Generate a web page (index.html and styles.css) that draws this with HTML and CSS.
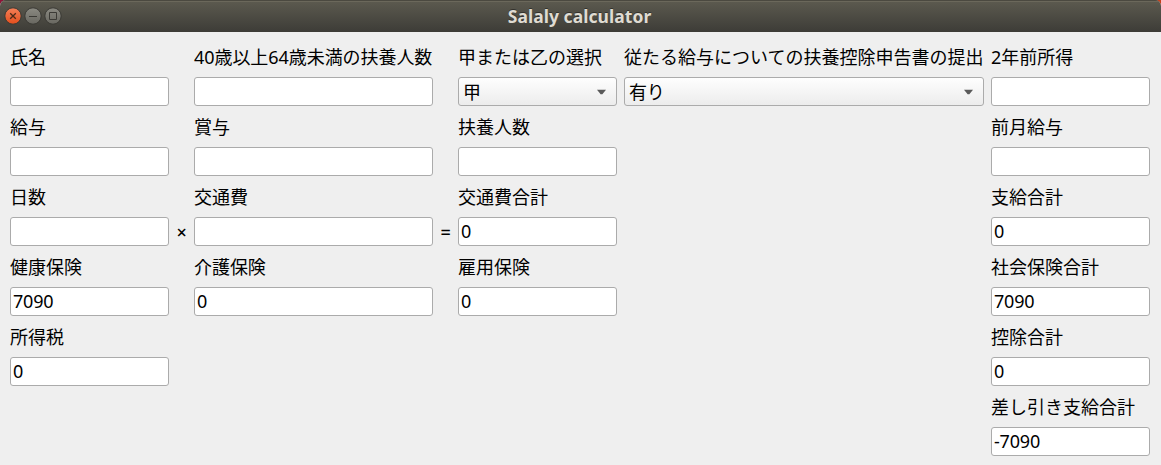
FILE: index.html
```html
<!DOCTYPE html>
<html lang="ja">
<head>
<meta charset="utf-8">
<title>Salaly calculator</title>
<link rel="stylesheet" href="styles.css">
</head>
<body>
<div class="window">
  <header class="titlebar">
    <div class="controls">
      <svg class="control" viewBox="0 0 18 18"><defs><linearGradient id="orange" x1="0" y1="0" x2="0" y2="1"><stop offset="0" stop-color="#f58058"/><stop offset="1" stop-color="#e34e1c"/></linearGradient><linearGradient id="gray" x1="0" y1="0" x2="0" y2="1"><stop offset="0" stop-color="#8b8a82"/><stop offset="1" stop-color="#686760"/></linearGradient></defs><circle cx="9" cy="9" r="8.2" fill="url(#orange)" stroke="#3a3934"/><path d="M6.2 6.2l5.6 5.6M11.8 6.2l-5.6 5.6" stroke="#4c2a18" stroke-width="1.3"/></svg>
      <svg class="control" viewBox="0 0 18 18"><circle cx="9" cy="9" r="8.2" fill="url(#gray)" stroke="#3a3934"/><path d="M5 9.5h8" stroke="#3b3a35"/></svg>
      <svg class="control" viewBox="0 0 18 18"><circle cx="9" cy="9" r="8.2" fill="url(#gray)" stroke="#3a3934"/><path d="M5.5 5.5h7v7h-7z" fill="none" stroke="#3b3a35"/></svg>
    </div>
    <h1 class="title">Salaly calculator</h1>
  </header>
  <main class="form">
    <label class="c1">氏名</label>
    <label class="c3">40歳以上64歳未満の扶養人数</label>
    <label class="c5">甲または乙の選択</label>
    <label class="c6">従たる給与についての扶養控除申告書の提出</label>
    <label class="c7">2年前所得</label>
    <div class="field c1"></div>
    <div class="field c3"></div>
    <div class="field combo c5"><span>甲</span><svg class="arrow" viewBox="0 0 10 6"><path d="M0 0.5h10L6 5.5H4z"/></svg></div>
    <div class="field combo c6"><span>有り</span><svg class="arrow" viewBox="0 0 10 6"><path d="M0 0.5h10L6 5.5H4z"/></svg></div>
    <div class="field c7"></div>

    <label class="c1">給与</label>
    <label class="c3">賞与</label>
    <label class="c5">扶養人数</label>
    <label class="c7">前月給与</label>
    <div class="field c1"></div>
    <div class="field c3"></div>
    <div class="field c5"></div>
    <div class="field c7"></div>

    <label class="c1">日数</label>
    <label class="c3">交通費</label>
    <label class="c5">交通費合計</label>
    <label class="c7">支給合計</label>
    <div class="field c1"></div>
    <span class="operator c2">×</span>
    <div class="field c3"></div>
    <span class="operator c4">=</span>
    <div class="field c5">0</div>
    <div class="field c7">0</div>

    <label class="c1">健康保険</label>
    <label class="c3">介護保険</label>
    <label class="c5">雇用保険</label>
    <label class="c7">社会保険合計</label>
    <div class="field c1">7090</div>
    <div class="field c3">0</div>
    <div class="field c5">0</div>
    <div class="field c7">7090</div>

    <label class="c1">所得税</label>
    <label class="c7">控除合計</label>
    <div class="field c1">0</div>
    <div class="field c7">0</div>

    <label class="c7">差し引き支給合計</label>
    <div class="field c7">-7090</div>
  </main>
</div>
</body>
</html>
```
FILE: styles.css
```css
* { box-sizing: border-box; }
body {
  margin: 0;
  background: linear-gradient(90deg, #8e1538 50%, #c8401c 50%);
  font: 18px/28px "Noto Sans", "Noto Sans CJK JP", sans-serif;
  color: #000;
}
.window {
  height: 465px;
  overflow: hidden;
  border-radius: 6px 6px 0 0;
  background: #efefef;
}
.titlebar {
  display: grid;
  grid-template-columns: 1fr auto 1fr;
  align-items: center;
  height: 32px;
  padding: 0 6px 0 4px;
  background: linear-gradient(#5d5b50, #3d3c37);
  box-shadow: inset 0 1px #4b4940, inset 0 2px #6b685b;
}
.controls { display: flex; gap: 2px; }
.control { width: 18px; height: 18px; }
.title {
  margin: 0;
  font: bold 17.5px/32px "Noto Sans", sans-serif;
  letter-spacing: 0.05px;
  color: #dfdbd2;
  text-shadow: 0 -1px #33322d;
}
.form {
  display: grid;
  grid-template-columns: 159px 11px 239px 11px 159px 360px 159px;
  grid-auto-rows: 29px;
  gap: 6px 7px;
  padding: 10px;
}
.c1 { grid-column: 1; }
.c2 { grid-column: 2; }
.c3 { grid-column: 3; }
.c4 { grid-column: 4; }
.c5 { grid-column: 5; }
.c6 { grid-column: 6; }
.c7 { grid-column: 7; }
label, .operator { padding-top: 1px; white-space: nowrap; }
.c3, .operator { letter-spacing: -0.06px; }
.operator { text-align: center; font-weight: 500; }
.field {
  display: flex;
  align-items: center;
  padding: 0 2px 2px;
  border: 1px solid #ababab;
  border-radius: 3px;
  background: #fff;
  letter-spacing: -0.2px;
}
.combo {
  justify-content: space-between;
  padding: 0 10px 0 4px;
  background: linear-gradient(#fefefe, #ececec);
}
.arrow { width: 9px; height: 6px; fill: #5a5a5a; }
```
